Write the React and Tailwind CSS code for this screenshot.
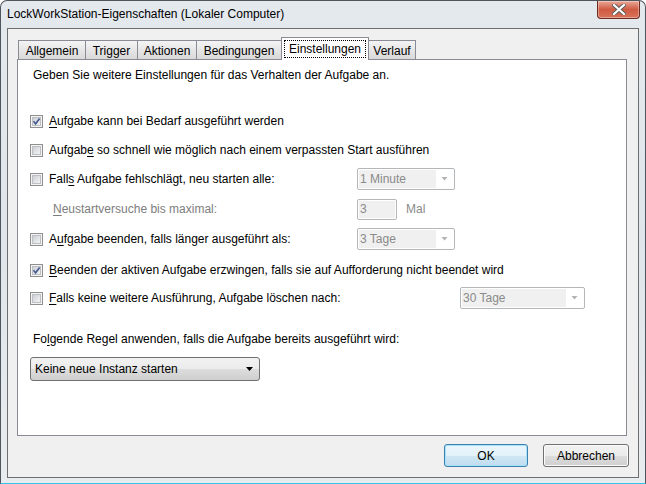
import clsx from 'clsx';

const Check = ({ checked }) => (
  <svg width="13" height="13" viewBox="0 0 13 13" className="shrink-0">
    <defs>
      <linearGradient id="cbg" x1="0" y1="0" x2="1" y2="1">
        <stop offset="0" stopColor="#c9cdd3" />
        <stop offset="1" stopColor="#f6f6f6" />
      </linearGradient>
    </defs>
    <rect x="0.5" y="0.5" width="12" height="12" fill="#f4f4f4" stroke="#8f8f8f" />
    <rect x="2.5" y="2.5" width="8" height="8" fill="url(#cbg)" stroke="#bcbfc3" />
    {checked && (
      <path d="M3.5 6.3 L5.6 8.8 L9.6 3.4" fill="none" stroke="#4b5e93" strokeWidth="1.7" />
    )}
  </svg>
);

const Arrow = ({ color }) => (
  <svg width="7" height="4" viewBox="0 0 7 4">
    <path d="M0 0 H7 L3.5 4 Z" fill={color} />
  </svg>
);

const DisabledSelect = ({ value, width, fill }) => (
  <div className={clsx('flex h-[22px] items-stretch rounded-[2px] border border-[#b4b7ba] bg-white p-px', width)}>
    <div className={clsx('flex items-center bg-[#f0f0f0] pl-px text-[#8a8a8a]', fill)}>{value}</div>
    <div className="flex flex-1 items-center justify-center">
      <svg width="7" height="4" viewBox="0 0 7 4">
        <path d="M0.5 0 H6.5 L3.5 3.5 Z" fill="#b3b3b3" />
      </svg>
    </div>
  </div>
);

const CheckRow = ({ checked, children, labelWidth, right, className }) => (
  <div className={clsx('flex h-[22px] items-center', className)}>
    <div className={clsx('flex items-center', labelWidth)}>
      <Check checked={checked} />
      <span className="ml-[6px] whitespace-nowrap">{children}</span>
    </div>
    {right}
  </div>
);

const U = ({ children }) => <span className="underline underline-offset-[2px]">{children}</span>;

const tabs = [
  { label: 'Allgemein', w: 'w-[68px]' },
  { label: 'Trigger', w: 'w-[53px]' },
  { label: 'Aktionen', w: 'w-[60px]' },
  { label: 'Bedingungen', w: 'w-[86px]' },
  { label: 'Einstellungen', w: 'w-[88px]', active: true },
  { label: 'Verlauf', w: 'w-[48px]' },
];

const App = () => {
  return (
    <div className="flex h-[484px] w-[646px] flex-col overflow-hidden rounded-t-[7px] border border-[#4f555c] border-b-[#35c3ea] bg-gradient-to-b from-[#e4e9ee] via-[#dfe5ea] to-[#e8ecef] font-['Liberation_Sans',Arial,sans-serif] text-[12px] text-black">
      {/* title bar */}
      <div className="flex h-[27px] shrink-0 items-start justify-between pl-[6px] pr-[5px]">
        <div className="pt-[6px] leading-[14px] text-[12px]">LockWorkStation-Eigenschaften (Lokaler Computer)</div>
        <div className="flex h-[18px] w-[43px] items-center justify-center rounded-b-[4px] border border-t-0 border-[#6b2b20] bg-gradient-to-b from-[#e8a898] via-[#cf5a42] to-[#d8735a] shadow-[inset_0_0_0_1px_rgba(255,255,255,0.35)]">
          <svg width="14" height="11" viewBox="0 0 14 11">
            <path d="M2 1 L12 10 M12 1 L2 10" stroke="#5a5a5a" strokeWidth="4" strokeLinecap="square" />
            <path d="M2 1 L12 10 M12 1 L2 10" stroke="#ffffff" strokeWidth="2.2" strokeLinecap="square" />
          </svg>
        </div>
      </div>

      {/* client area */}
      <div className="mx-[6px] mb-[5px] flex flex-1 flex-col border border-[#6e6e6e] bg-[#f0f0f0]">
        {/* tab strip */}
        <div className="relative z-10 mt-[8px] ml-[10px] flex h-[23px] items-end">
          {tabs.map((t, i) =>
            t.active ? (
              <div
                key={t.label}
                className={clsx('relative z-10 -ml-px flex h-[23px] items-start justify-center border border-b-0 border-[#898c95] bg-white pt-[2px]', t.w)}
              >
                <span className="flex h-[18px] w-[82px] items-center justify-center border border-dotted border-black leading-none">
                  {t.label}
                </span>
              </div>
            ) : (
              <div
                key={t.label}
                className={clsx(
                  'mb-px flex h-[19px] items-center justify-center border border-b-0 border-[#898c95] bg-gradient-to-b from-[#f4f4f4] via-[#e6e6e6] to-[#d9d9d9] pt-px',
                  i > 0 && '-ml-px',
                  t.w
                )}
              >
                {t.label}
              </div>
            )
          )}
        </div>

        {/* panel */}
        <div className="-mt-px ml-[9px] mr-[11px] flex h-[377px] flex-col border border-[#898c95] bg-white pl-[12px]">
          <div className="mt-[4px] flex h-[22px] items-center pl-[3px]">
            Geben Sie weitere Einstellungen für das Verhalten der Aufgabe an.
          </div>

          <CheckRow checked className="mt-[24px]">
            <U>A</U>ufgabe kann bei Bedarf ausgeführt werden
          </CheckRow>
          <CheckRow className="mt-[7px]">
            Aufgab<U>e</U> so schnell wie möglich nach einem verpassten Start ausführen
          </CheckRow>
          <CheckRow
            className="mt-[7px]"
            labelWidth="w-[327px]"
            right={<DisabledSelect value="1 Minute" width="w-[98px]" fill="w-[77px]" />}
          >
            Fall<U>s</U> Aufgabe fehlschlägt, neu starten alle:
          </CheckRow>

          <div className="mt-[8px] flex h-[22px] items-center">
            <div className="w-[327px] pl-[23px] text-[#7d7d7d]">
              <U>N</U>eustartversuche bis maximal:
            </div>
            <div className="flex h-[21px] w-[40px] items-stretch rounded-[2px] border border-[#b4b7ba] bg-white p-px">
              <div className="flex w-[36px] items-center bg-[#f0f0f0] pl-px text-[#8a8a8a]">3</div>
            </div>
            <div className="ml-[9px] text-[#8a8a8a]">Mal</div>
          </div>

          <CheckRow
            className="mt-[8px]"
            labelWidth="w-[327px]"
            right={<DisabledSelect value="3 Tage" width="w-[98px]" fill="w-[77px]" />}
          >
            A<U>u</U>fgabe beenden, falls länger ausgeführt als:
          </CheckRow>
          <CheckRow checked className="mt-[9px]">
            <U>B</U>eenden der aktiven Aufgabe erzwingen, falls sie auf Aufforderung nicht beendet wird
          </CheckRow>
          <CheckRow
            className="mt-[6px]"
            labelWidth="w-[430px]"
            right={<DisabledSelect value="30 Tage" width="w-[125px]" fill="w-[104px]" />}
          >
            <U>F</U>alls keine weitere Ausführung, Aufgabe löschen nach:
          </CheckRow>

          <div className="mt-[19px] flex h-[22px] items-center pl-[3px]">
            Fo<U>l</U>gende Regel anwenden, falls die Aufgabe bereits ausgeführt wird:
          </div>

          <div className="mt-[7px] flex h-[24px] w-[230px] items-center justify-between rounded-[3px] border border-[#707070] bg-[linear-gradient(#f2f2f2_0%,#ebebeb_50%,#dddddd_50%,#cfcfcf_100%)] pl-[4px] pr-[6px]">
            <span>Keine neue Instanz starten</span>
            <Arrow color="#000000" />
          </div>
        </div>

        {/* buttons */}
        <div className="mt-[8px] mr-[9px] flex justify-end gap-[15px]">
          <button className="flex h-[23px] w-[84px] items-center justify-center rounded-[3px] border border-[#3c7fb1] bg-[linear-gradient(#eaf6fd_0%,#e3f1f9_50%,#d0e8f5_50%,#bfdcee_100%)] shadow-[inset_0_0_0_1px_#a6e2f8]">
            OK
          </button>
          <button className="flex h-[23px] w-[86px] items-center justify-center rounded-[3px] border border-[#707070] bg-[linear-gradient(#f2f2f2_0%,#ebebeb_50%,#dddddd_50%,#cfcfcf_100%)] shadow-[inset_0_0_0_1px_#fbfbfb]">
            Abbrechen
          </button>
        </div>
      </div>
    </div>
  );
};

export default App;
